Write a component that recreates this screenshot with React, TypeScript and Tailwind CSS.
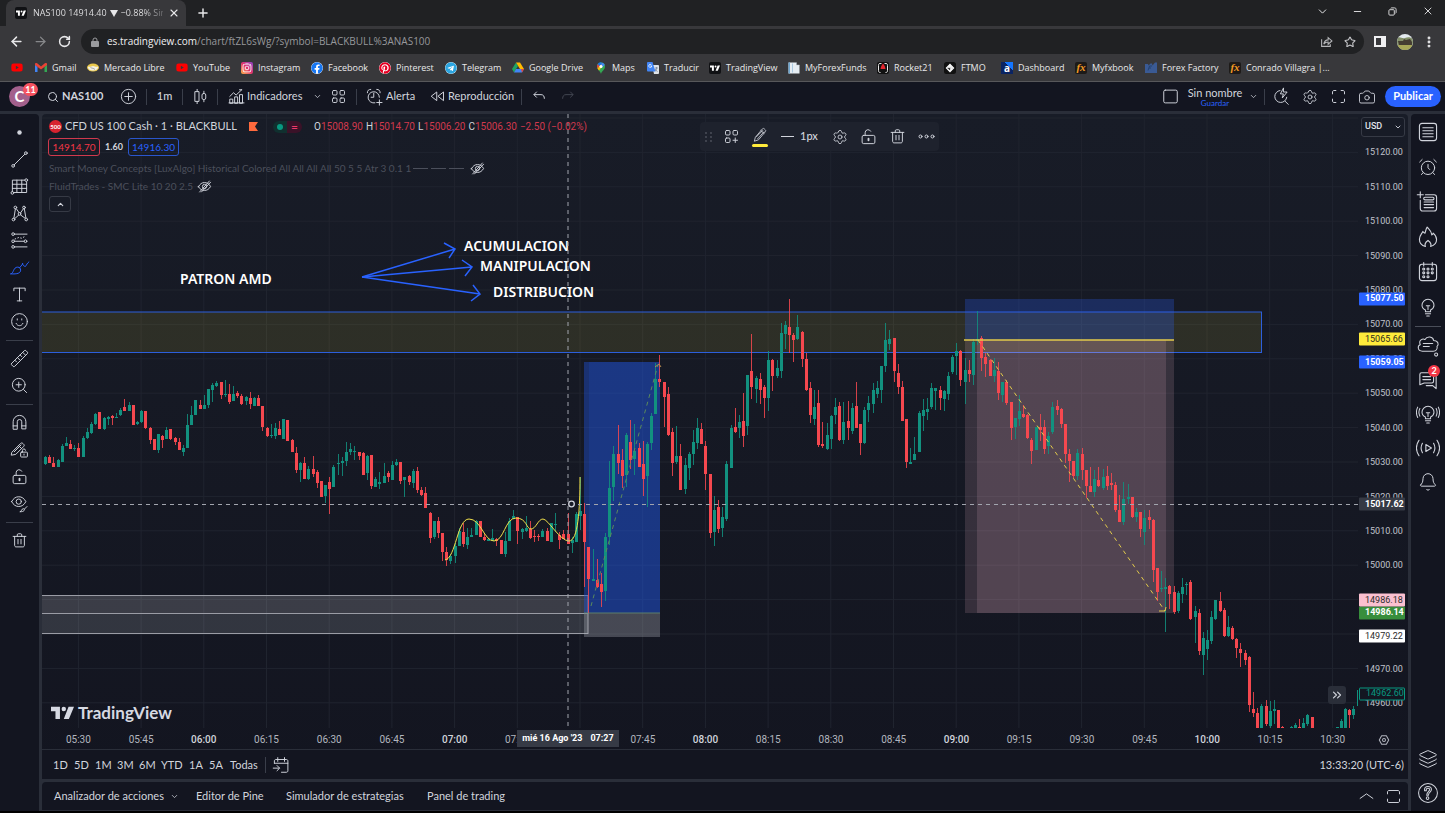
import type { ReactNode } from "react";
import {
  AlarmClock,
  ArrowLeft,
  ArrowRight,
  Bell,
  Camera,
  ChevronDown,
  ChevronUp,
  ChevronsRight,
  Layers,
  Minus,
  MoreVertical,
  Plus,
  RotateCw,
  Search,
  Settings,
  Star,
  X,
} from "lucide-react";
import { FaFacebook, FaInstagram, FaPinterest, FaTelegram, FaYoutube } from "react-icons/fa";

// [high, body top, body bottom, low, up] for each one-minute candle, null where it is out of view
type Candle = [number, number, number, number, number] | null;

const candles: Candle[] = [
  [456, 457, 464, 465, 1], [455, 457, 463, 463, 0], [457, 463, 467, 467, 0], [459, 460, 467, 467, 1], [444, 446, 462, 462, 1],
  [437, 443, 446, 446, 1], [440, 444, 449, 449, 0], [445, 448, 449, 451, 1], [443, 448, 457, 457, 0], [436, 438, 457, 457, 1],
  [428, 432, 438, 439, 1], [422, 424, 433, 434, 1], [413, 414, 424, 425, 1], [412, 412, 429, 429, 0], [417, 418, 429, 430, 1],
  [416, 417, 419, 425, 1], [415, 416, 418, 425, 0], [413, 417, 418, 418, 1], [408, 410, 415, 416, 1], [399, 407, 411, 411, 0],
  [402, 405, 411, 411, 1], [405, 405, 425, 425, 0], [421, 422, 424, 425, 1], [410, 411, 422, 423, 1], [411, 411, 428, 429, 0],
  [427, 428, 440, 444, 0], [439, 439, 450, 450, 0], [434, 434, 450, 453, 1], [435, 436, 440, 448, 0], [427, 430, 439, 439, 1],
  [429, 429, 439, 440, 0], [437, 438, 442, 445, 0], [438, 442, 450, 450, 0], [445, 448, 452, 456, 1], [414, 425, 448, 448, 1],
  [406, 415, 425, 425, 1], [400, 400, 415, 415, 1], [400, 405, 409, 409, 0], [395, 405, 409, 409, 1], [389, 389, 405, 408, 1],
  [383, 385, 390, 402, 1], [381, 383, 386, 387, 1], [382, 382, 395, 399, 0], [380, 394, 395, 397, 1], [384, 394, 402, 404, 0],
  [386, 394, 401, 401, 1], [391, 393, 396, 398, 0], [394, 396, 404, 405, 0], [396, 397, 401, 405, 1], [392, 398, 404, 409, 0],
  [397, 398, 406, 406, 1], [395, 398, 406, 406, 0], [406, 406, 427, 431, 0], [427, 428, 436, 437, 0], [424, 435, 436, 438, 1],
  [423, 428, 436, 439, 1], [421, 429, 435, 435, 0], [419, 419, 439, 439, 1], [420, 420, 441, 441, 0], [439, 440, 452, 452, 0],
  [447, 453, 470, 473, 0], [462, 463, 470, 482, 1], [457, 463, 479, 479, 0], [466, 469, 479, 480, 1], [456, 469, 474, 477, 0],
  [470, 472, 483, 488, 0], [481, 481, 497, 497, 0], [485, 485, 496, 503, 1], [477, 482, 489, 514, 0], [465, 467, 487, 487, 1],
  [454, 463, 464, 475, 1], [457, 461, 463, 476, 1], [442, 452, 461, 466, 1], [443, 449, 452, 455, 1], [446, 451, 452, 460, 1],
  [452, 452, 456, 460, 0], [452, 453, 475, 475, 0], [455, 456, 473, 480, 1], [455, 455, 486, 489, 0], [477, 479, 487, 487, 1],
  [472, 482, 484, 489, 1], [463, 476, 483, 483, 1], [471, 473, 477, 482, 0], [461, 465, 480, 480, 1], [459, 462, 465, 466, 1],
  [462, 462, 481, 484, 0], [477, 477, 480, 497, 1], [475, 476, 482, 485, 0], [469, 471, 483, 488, 1], [467, 471, 490, 493, 0],
  [487, 490, 495, 496, 0], [487, 493, 508, 508, 0], [512, 513, 538, 543, 0], [521, 521, 537, 539, 1], [517, 521, 533, 538, 0],
  [533, 533, 552, 561, 0], [547, 552, 560, 566, 0], [554, 556, 561, 564, 1], [543, 546, 556, 563, 1], [528, 531, 546, 546, 1],
  [523, 532, 544, 547, 0], [528, 537, 545, 549, 1], [528, 535, 537, 537, 1], [520, 521, 535, 535, 1], [521, 521, 537, 537, 0],
  [534, 537, 540, 541, 0], [538, 539, 541, 541, 1], [529, 538, 541, 541, 1], [538, 539, 541, 546, 0], [540, 540, 554, 554, 0],
  [532, 541, 554, 557, 1], [518, 521, 541, 541, 1], [510, 516, 519, 519, 1], [517, 517, 531, 544, 0], [528, 529, 532, 539, 1],
  [516, 528, 531, 532, 1], [521, 529, 538, 539, 0], [530, 536, 537, 542, 0], [534, 536, 537, 541, 0], [529, 531, 537, 537, 1],
  [528, 531, 541, 541, 0], [523, 523, 542, 542, 1], [513, 524, 525, 532, 1], [532, 535, 540, 549, 0], [530, 534, 539, 539, 0],
  [513, 534, 544, 544, 0], [537, 540, 543, 553, 1], [512, 514, 542, 542, 1], [477, 511, 516, 530, 1], [503, 514, 542, 587, 0],
  [547, 547, 579, 613, 0], [549, 579, 581, 581, 1], [559, 580, 587, 588, 0], [573, 584, 592, 607, 0], [533, 537, 591, 601, 1],
  [461, 488, 537, 545, 1], [446, 454, 487, 501, 1], [425, 454, 463, 474, 0], [449, 460, 476, 488, 0], [433, 435, 475, 487, 1],
  [420, 442, 460, 469, 0], [424, 451, 459, 475, 1], [443, 448, 467, 467, 0], [441, 464, 479, 496, 0], [442, 444, 476, 507, 1],
  [413, 416, 443, 450, 1], [363, 379, 414, 414, 1], [355, 379, 382, 387, 0], [382, 382, 397, 427, 0], [387, 394, 435, 436, 0],
  [428, 432, 463, 476, 0], [426, 456, 462, 464, 1], [444, 456, 490, 490, 0], [458, 465, 489, 494, 1], [452, 454, 468, 480, 1],
  [430, 442, 454, 465, 1], [418, 428, 443, 449, 1], [423, 429, 444, 444, 0], [441, 446, 474, 490, 0], [474, 474, 533, 538, 0],
  [496, 510, 532, 546, 1], [500, 507, 529, 533, 0], [507, 517, 528, 537, 1], [461, 464, 519, 521, 1], [425, 428, 468, 468, 1],
  [408, 427, 432, 433, 0], [415, 422, 428, 438, 1], [393, 421, 436, 447, 0], [375, 375, 426, 435, 1], [334, 371, 387, 399, 0],
  [376, 378, 389, 403, 1], [373, 379, 390, 404, 0], [385, 387, 398, 418, 0], [351, 360, 398, 411, 1], [359, 360, 376, 391, 0],
  [360, 368, 376, 378, 1], [323, 333, 371, 378, 1], [321, 325, 334, 349, 1], [299, 327, 335, 353, 0], [333, 335, 340, 362, 0],
  [315, 327, 339, 340, 1], [331, 332, 359, 367, 0], [353, 359, 390, 391, 0], [382, 388, 415, 423, 0], [390, 407, 419, 425, 1],
  [390, 403, 445, 447, 0], [422, 444, 446, 448, 0], [423, 435, 449, 450, 1], [415, 416, 439, 449, 1], [398, 407, 415, 424, 1],
  [402, 406, 440, 441, 0], [402, 422, 440, 444, 1], [401, 421, 428, 440, 0], [403, 408, 431, 434, 1], [382, 406, 428, 428, 0],
  [424, 424, 443, 455, 0], [407, 410, 443, 444, 1], [396, 403, 410, 422, 1], [383, 390, 404, 413, 1], [381, 388, 394, 398, 1],
  [366, 366, 390, 403, 1], [323, 340, 366, 372, 1], [330, 339, 344, 350, 1], [338, 338, 371, 382, 0], [364, 373, 387, 394, 0],
  [381, 387, 421, 421, 0], [419, 419, 462, 468, 0], [448, 462, 464, 464, 1], [437, 454, 460, 460, 1], [411, 413, 452, 452, 1],
  [399, 410, 416, 431, 1], [398, 409, 412, 420, 1], [383, 388, 407, 409, 1], [388, 388, 391, 410, 1], [386, 390, 398, 410, 0],
  [390, 391, 399, 411, 1], [372, 376, 394, 400, 1], [355, 357, 372, 374, 1], [343, 351, 356, 375, 1], [350, 351, 380, 386, 0],
  [358, 370, 382, 404, 1], [360, 370, 374, 382, 0], [339, 342, 375, 385, 1], [311, 339, 341, 345, 1], [336, 338, 358, 371, 0],
  [353, 357, 364, 377, 0], [359, 360, 376, 376, 0], [358, 370, 376, 382, 1], [362, 371, 393, 400, 0], [382, 382, 395, 402, 1],
  [380, 382, 403, 405, 0], [402, 402, 428, 440, 0], [418, 418, 427, 439, 1], [395, 411, 419, 426, 1], [405, 414, 417, 418, 0],
  [414, 415, 438, 439, 0], [438, 440, 451, 464, 0], [427, 427, 450, 450, 1], [414, 427, 430, 441, 0], [420, 427, 449, 454, 0],
  [432, 436, 446, 454, 1], [402, 407, 432, 434, 1], [400, 406, 410, 415, 0], [408, 409, 424, 428, 0], [424, 424, 454, 463, 0],
  [449, 454, 461, 482, 0], [461, 461, 476, 478, 0], [449, 453, 476, 480, 1], [448, 454, 470, 480, 0], [470, 470, 486, 498, 0],
  [467, 486, 492, 492, 0], [470, 479, 492, 497, 1], [467, 480, 486, 487, 0], [469, 477, 488, 490, 1], [466, 476, 486, 490, 0],
  [473, 483, 485, 490, 0], [482, 485, 510, 512, 0], [495, 510, 522, 522, 0], [482, 499, 522, 525, 1], [484, 497, 499, 504, 1],
  [497, 497, 517, 518, 0], [508, 512, 517, 522, 1], [512, 512, 529, 537, 0], [510, 518, 532, 545, 1], [510, 517, 520, 529, 0],
  [519, 520, 570, 582, 0], [568, 568, 592, 601, 0], [571, 588, 589, 592, 1], [578, 587, 589, 632, 1], [585, 586, 594, 609, 0],
  [586, 592, 612, 614, 0], [591, 593, 611, 613, 1], [578, 587, 594, 603, 1], [582, 584, 585, 595, 1], [580, 582, 619, 620, 0],
  [606, 611, 617, 643, 1], [609, 613, 651, 655, 0], [632, 638, 655, 675, 1], [630, 640, 649, 660, 1], [611, 617, 641, 644, 1],
  [600, 600, 619, 620, 1], [592, 601, 611, 612, 0], [608, 610, 636, 637, 0], [616, 627, 636, 637, 1], [626, 628, 639, 640, 0],
  [638, 639, 648, 658, 0], [643, 649, 653, 667, 0], [650, 653, 660, 665, 0], [656, 657, 705, 712, 0], [692, 709, 713, 717, 0],
  [708, 713, 729, 729, 0], [704, 706, 728, 729, 1], [700, 706, 724, 726, 0], [701, 711, 726, 728, 1], [700, 709, 711, 724, 1],
  [710, 710, 729, 729, 0], [726, 727, 729, 729, 0], null, [726, 727, 729, 729, 1], [723, 725, 729, 729, 1],
  [719, 727, 729, 729, 0], [718, 723, 729, 729, 1], [714, 715, 724, 726, 1], [717, 717, 729, 729, 0], null,
  null, null, null, null, [727, 727, 729, 729, 1],
  [719, 721, 729, 729, 1], [708, 709, 728, 728, 1], [709, 710, 715, 728, 0], [706, 709, 715, 719, 1], [690, 690, 706, 715, 1],
];

const firstX = 45;
const stepX = 4.18;

const times = [
  "05:30", "05:45", "06:00", "06:15", "06:30", "06:45", "07:00", "07:15", "07:30", "07:45", "08:00",
  "08:15", "08:30", "08:45", "09:00", "09:15", "09:30", "09:45", "10:00", "10:15", "10:30",
];

const prices = Array.from({ length: 17 }, (_, i) => 15120 - i * 10);

// price at the top edge of the plot and the span that it covers
const topPrice = 15131.2;
const priceSpan = 178.6;

const priceTags = [
  { price: 15077.5, style: "bg-[#2962ff] text-white font-bold" },
  { price: 15065.66, style: "bg-[#ffeb3b] text-[#2b2b20]" },
  { price: 15059.05, style: "bg-[#2962ff] text-white font-bold" },
  { price: 15017.62, style: "bg-[#363a45] text-white font-bold h-4" },
  { price: 14986.14, style: "bg-[#388e3c] text-white font-bold" },
  { price: 14989.8, label: "14986.18", style: "bg-[#fbc0d0] text-[#2b2b2b]" },
  { price: 14979.22, style: "bg-white text-[#2b2b2b]" },
  { price: 14962.6, style: "bg-[#131722] text-[#089981] border border-[#089981]" },
];

function Glyph({ children, className = "size-[21px]", width = 1.3 }: { children: ReactNode; className?: string; width?: number }) {
  return (
    <svg
      viewBox="0 0 28 28"
      className={`shrink-0 ${className}`}
      fill="none"
      stroke="currentColor"
      strokeWidth={width}
      strokeLinecap="round"
      strokeLinejoin="round"
      aria-hidden="true"
    >
      {children}
    </svg>
  );
}

const TrashGlyph = () => (
  <Glyph>
    <path d="M5.5 8.5h17M11 8.5v-2c0-.8.6-1.5 1.5-1.5h3c.9 0 1.5.7 1.5 1.5v2M7.5 8.5v12c0 1.2.8 2 2 2h9c1.2 0 2-.8 2-2v-12M12 12.500v6M16 12.500v6" />
  </Glyph>
);

const LockGlyph = () => (
  <Glyph>
    <rect x="5.500" y="12.500" width="17" height="11" rx="2" />
    <path d="M9.500 12.500V9a4 4 0 0 1 7.500-2" />
    <path d="M14 17v2" strokeWidth="2.500" />
  </Glyph>
);

const GearGlyph = () => <Settings className="size-4" strokeWidth={1.3} />;

const EyeOffGlyph = () => (
  <Glyph className="size-[17px]" width={1.6}>
    <path d="M4 14.500C6.500 9.500 10 7.500 14 7.500s7.500 2 10 6.500c-2.500 4.500-6 6.500-10 6.500s-7.500-2-10-6z" />
    <circle cx="14" cy="14" r="3.500" />
    <path d="M6 23 22 5M9 23 24 7" />
  </Glyph>
);

const BulbGlyph = ({ waves = false }: { waves?: boolean }) => (
  <Glyph className="size-6" width={1.2}>
    <path d="M11 19.500v-2c-2.500-1.200-4-3-4-5.500a7 7 0 0 1 14 0c0 2.500-1.500 4.300-4 5.500v2zM11 22h6M12.500 24.500h3M14 17v-4M12 12.500h4" />
    {waves && <path d="M4.500 7.500c-1.500 3-1.500 6 0 9M2 6c-2 4-2 8 0 12M23.500 7.500c1.500 3 1.500 6 0 9M26 6c2 4 2 8 0 12" />}
  </Glyph>
);

const TvMark = ({ className }: { className: string }) => (
  <svg viewBox="0 0 36 20" className={className} fill="currentColor" aria-hidden="true">
    <path d="M14 20H7V8H0V1h14zM28 20h-8l7.500-19H36z" />
    <circle cx="20" cy="4.500" r="3.500" />
  </svg>
);

const TvBadge = () => (
  <span className="flex size-3 shrink-0 items-center justify-center rounded-xs bg-[#101114] text-white">
    <TvMark className="h-[6px] w-[10px]" />
  </span>
);

const FxBadge = () => (
  <span className="flex size-3 shrink-0 items-center justify-center rounded-xs bg-[#1d1a18] font-['Liberation_Serif',serif] text-[11px] leading-none font-bold text-[#f59b23] italic">
    fx
  </span>
);

const bookmarks: { name: string; width: string; icon: ReactNode }[] = [
  { name: "", width: "w-6", icon: <FaYoutube className="size-[13px] text-[#f00]" /> },
  {
    name: "Gmail",
    width: "w-[52px]",
    icon: (
      <svg viewBox="0 0 24 18" className="h-[9px] w-3">
        <path fill="#4285f4" d="M0 3v15h5V8z" />
        <path fill="#34a853" d="M19 18h5V3l-5 5z" />
        <path fill="#ea4335" d="M0 2c0-2 3-3 5-1l7 6 7-6c2-2 5-1 5 1v2l-12 9L0 4z" />
      </svg>
    ),
  },
  {
    name: "Mercado Libre",
    width: "w-[89px]",
    icon: (
      <svg viewBox="0 0 24 18" className="h-[9px] w-[13px]">
        <ellipse cx="12" cy="9" rx="12" ry="8" fill="#e9c84b" />
        <path d="M2 7c5 2 6-1 10-1s6 3 10 1c1 5-4 8-10 8S1 12 2 7z" fill="#f4f0e2" />
        <path d="M7 9c3 2 6 1 9 4" stroke="#53606f" fill="none" />
      </svg>
    ),
  },
  { name: "YouTube", width: "w-[65px]", icon: <FaYoutube className="size-[13px] text-[#f00]" /> },
  {
    name: "Instagram",
    width: "w-[70px]",
    icon: (
      <span className="flex size-3 items-center justify-center rounded-xs bg-linear-to-tr from-[#fdb13c] via-[#e1306c] to-[#8a3ac8] text-white">
        <FaInstagram className="size-[10px]" />
      </span>
    ),
  },
  { name: "Facebook", width: "w-[68px]", icon: <FaFacebook className="size-3 rounded-full bg-white text-[#1877f2]" /> },
  { name: "Pinterest", width: "w-[66px]", icon: <FaPinterest className="size-3 rounded-full bg-white text-[#e60023]" /> },
  { name: "Telegram", width: "w-[67px]", icon: <FaTelegram className="size-3 rounded-full bg-white text-[#2ca5e0]" /> },
  {
    name: "Google Drive",
    width: "w-[83px]",
    icon: (
      <svg viewBox="0 0 24 22" className="h-[11px] w-3">
        <path fill="#1ea362" d="M8 1 0 14l4 7 8-13z" />
        <path fill="#ffba00" d="M8 1h8l8 13h-8z" />
        <path fill="#4285f4" d="M4 21h16l4-7H8z" />
        <path fill="#ea4335" d="m20 21 4-7h-6z" />
      </svg>
    ),
  },
  {
    name: "Maps",
    width: "w-[52px]",
    icon: (
      <svg viewBox="0 0 20 24" className="h-3 w-[10px]">
        <path fill="#34a853" d="M10 24C9 18 2 16 2 9a8 8 0 0 1 16 0c0 7-7 9-8 15z" />
        <path fill="#1a73e8" d="M3 5a8 8 0 0 1 10-3.500L6 10z" />
        <path fill="#ea4335" d="M3.500 4.500 7 8l-4 5C1.500 10 2 7 3.500 4.500z" />
        <path fill="#fbbc04" d="m3 13 9-10 4 2-10 12z" />
        <path fill="#4285f4" d="M12.500 1.500A8 8 0 0 1 17.500 6L13 10l-3-5z" />
        <circle cx="10" cy="9" r="3" fill="#fff" />
      </svg>
    ),
  },
  {
    name: "Traducir",
    width: "w-[62px]",
    icon: (
      <svg viewBox="0 0 24 24" className="size-3">
        <path fill="#dfe3e8" d="M10 6h12c1 0 2 1 2 2v14c0 1-1 2-2 2h-8z" />
        <path fill="#4285f4" d="M2 0h9l6 19H2c-1 0-2-1-2-2V2c0-1 1-2 2-2z" />
        <path d="M10 8H7M9.500 8a3 3 0 1 1-1-2.500" stroke="#fff" strokeWidth="1.500" fill="none" />
        <path d="M16 12h6M19 10v2c0 3-1 5-3 6m0-4c1 2 3 4 5 5" stroke="#5f6f86" strokeWidth="1.200" fill="none" />
      </svg>
    ),
  },
  { name: "TradingView", width: "w-[79px]", icon: <TvBadge /> },
  {
    name: "MyForexFunds",
    width: "w-[89px]",
    icon: (
      <svg viewBox="0 0 24 24" className="size-3">
        <path fill="#e6edf3" d="M1 1h16v5h6v17H1z" />
        <path fill="#6fa6cf" d="M1 1h3v22H1zM8 3h1v18H8z" />
        <path d="M17 1v5h6" stroke="#b4bfca" fill="none" />
      </svg>
    ),
  },
  {
    name: "Rocket21",
    width: "w-[67px]",
    icon: (
      <svg viewBox="0 0 24 24" className="size-3">
        <rect width="24" height="24" rx="4" fill="#111" />
        <path d="M9 3H6C3 3 3 5 3 7v10c0 3 1 4 4 4M15 3h3c3 0 3 2 3 4v10c0 3-1 4-4 4" stroke="#e8e8e8" strokeWidth="2" fill="none" />
        <path fill="#e3262e" d="M12 3c3 4 4 5 5 11H7C8 8 9 7 12 3z" />
      </svg>
    ),
  },
  {
    name: "FTMO",
    width: "w-[57px]",
    icon: (
      <svg viewBox="0 0 24 24" className="size-3">
        <rect width="24" height="24" rx="5" fill="#111" />
        <path d="m12 5 7 7-7 7-7-7z M9 12l3-3 3 3-3 3" stroke="#fff" strokeWidth="2.500" fill="none" />
      </svg>
    ),
  },
  {
    name: "Dashboard",
    width: "w-[74px]",
    icon: (
      <span className="flex size-3 items-center justify-center bg-linear-to-bl from-[#1476ff] from-35% to-[#0a2463] to-35% text-[10px] leading-none font-bold text-white">
        a
      </span>
    ),
  },
  { name: "Myfxbook", width: "w-[70px]", icon: <FxBadge /> },
  {
    name: "Forex Factory",
    width: "w-[84px]",
    icon: (
      <svg viewBox="0 0 24 22" className="h-[11px] w-3">
        <path fill="#3a5a94" d="M0 4h6l1 3 4-4h3l1 4 5-6h4v21H0z" />
        <path d="M6 17 9 8h5M8 12h4" stroke="#22406f" strokeWidth="2" fill="none" />
      </svg>
    ),
  },
  { name: "Conrado Villagra |...", width: "w-[110px]", icon: <FxBadge /> },
];

function Browser() {
  return (
    <header className="bg-[#38383b] font-['Open_Sans','Noto_Sans',sans-serif] text-[9px] text-[#e8e8ea]">
      <div className="flex h-[26px] items-stretch bg-[#202123]">
        <div className="ml-[6px] flex w-[180px] items-center rounded-t-lg bg-[#38383b] pl-[9px]">
          <TvBadge />
          <span className="ml-[6px] flex w-[130px] items-center overflow-hidden bg-linear-to-r from-[#e8e8ea] from-85% to-[#6a6a6d] bg-clip-text whitespace-nowrap text-transparent">
            NAS100 14914.40
            <svg viewBox="0 0 8 7" className="mx-[3px] h-[7px] w-2 shrink-0" role="img" aria-label="baja">
              <path fill="#e8e8ea" d="M0 0h8L4 7z" />
            </svg>
            −0.88% Sin
          </span>
          <button type="button" aria-label="Cerrar pestaña" className="ml-[5px]">
            <X className="size-3" strokeWidth={2.2} />
          </button>
        </div>
        <button type="button" aria-label="Nueva pestaña" className="ml-[10px]">
          <Plus className="size-[14px]" strokeWidth={2.5} />
        </button>
        <div className="ml-auto flex items-center pb-1">
          <button type="button" aria-label="Buscar pestañas" className="flex w-[35px] justify-center">
            <ChevronDown className="size-[13px]" strokeWidth={1.8} />
          </button>
          <button type="button" aria-label="Minimizar" className="flex w-[35px] justify-center">
            <Minus className="size-[11px]" strokeWidth={2} />
          </button>
          <button type="button" aria-label="Restaurar" className="flex w-[35px] justify-center">
            <svg viewBox="0 0 10 10" className="size-[9px]" fill="none" stroke="currentColor">
              <rect x="1" y="3" width="6" height="6" rx="1" />
              <path d="M3 1.500C3 1 3.500 1 4 1h3c1.500 0 2 .5 2 2v3c0 .5 0 1-.5 1" />
            </svg>
          </button>
          <button type="button" aria-label="Cerrar" className="flex w-[35px] justify-center">
            <X className="size-3" strokeWidth={1.8} />
          </button>
        </div>
      </div>

      <div className="flex h-7 items-center pt-[3px]">
        <button type="button" aria-label="Atrás" className="ml-[9px]">
          <ArrowLeft className="size-[15px]" strokeWidth={2.4} />
        </button>
        <button type="button" aria-label="Adelante" className="ml-[9px] text-[#87888b]">
          <ArrowRight className="size-[15px]" strokeWidth={2} />
        </button>
        <button type="button" aria-label="Recargar" className="ml-[10px]">
          <RotateCw className="size-[13px]" strokeWidth={2.8} />
        </button>
        <div className="ml-[10px] flex h-[25px] flex-1 items-center rounded-full bg-[#202123] pr-[8px] pl-[10px]">
          <svg viewBox="0 0 8 10" className="h-[10px] w-2 text-[#9a9b9e]">
            <rect y="4" width="8" height="6" rx="1" fill="currentColor" />
            <path d="M2 4V3a2 2 0 0 1 4 0v1" stroke="currentColor" fill="none" />
          </svg>
          <div className="ml-2 flex-1 text-[10px] text-[#97989b]">
            <span className="text-[#f0f0f2]">es.tradingview.com</span>/chart/ftZL6sWg/?symbol=BLACKBULL%3ANAS100
          </div>
          <button type="button" aria-label="Compartir" className="text-[#b5b6b9]">
            <svg viewBox="0 0 24 24" className="size-[13px]" fill="none" stroke="currentColor" strokeWidth="2">
              <path d="M3 8v13h16v-4M7 17c1-6 4-8 8-8V5l7 6-7 6v-4c-4 0-6 1-8 4z" />
            </svg>
          </button>
          <button type="button" aria-label="Favorito" className="ml-[11px] text-[#c6c7ca]">
            <Star className="size-3" strokeWidth={2.2} />
          </button>
        </div>
        <button type="button" aria-label="Panel lateral" className="ml-[10px] flex h-[11px] w-[12px] justify-end border-2 border-[#f0f0f2]">
          <span className="h-full w-[3px] bg-[#f0f0f2]" />
        </button>
        <button type="button" aria-label="Perfil" className="ml-[11px]">
          <svg viewBox="0 0 16 16" className="size-4 rounded-full">
            <path fill="#e3e9ee" d="M0 0h16v16H0z" />
            <path fill="#83906a" d="M0 4c3-2 5 1 8 0s5-1 8 1v11H0z" />
            <path fill="#453e32" d="M1 7h5l1-2 2 1 4-1 2 3v3H2z" />
            <path fill="#a8a858" d="M0 11h16v5H0z" />
          </svg>
        </button>
        <button type="button" aria-label="Menú" className="mr-[9px] ml-[9px]">
          <MoreVertical className="size-[14px]" strokeWidth={3} />
        </button>
      </div>

      <nav className="flex h-7 items-center overflow-hidden border-b border-[#57575a] pl-[11px]">
        {bookmarks.map((b, i) => (
          <a key={i} href="#" aria-label={b.name || "YouTube"} className={`flex shrink-0 items-center gap-[5px] whitespace-nowrap ${b.width}`}>
            <span className="flex w-3 shrink-0 justify-center">{b.icon}</span>
            {b.name}
          </a>
        ))}
      </nav>
    </header>
  );
}

const Divider = () => <span className="h-4 w-px shrink-0 bg-[#3a3e4a]" />;

function TopBar() {
  return (
    <div className="flex h-[29px] items-center bg-[#131520] text-[11px] text-[#d1d4dc]">
      <button type="button" aria-label="Menú de usuario" className="relative ml-[9px] flex size-[21px] items-center justify-center rounded-full bg-[#a3608c] text-[15px] font-bold text-white">
        C
        <span className="absolute -top-[3px] left-[14px] flex h-[13px] w-[15px] items-center justify-center rounded-full bg-[#f7525f] text-[9px] font-bold">
          11
        </span>
      </button>
      <button type="button" className="ml-[17px] flex w-[69px] items-center gap-[3px] font-bold">
        <Search className="size-3" strokeWidth={2} />
        NAS100
      </button>
      <button type="button" aria-label="Comparar" className="flex w-[25px] justify-center">
        <Glyph>
          <circle cx="14" cy="14" r="9.500" />
          <path d="M14 9v10M9 14h10" />
        </Glyph>
      </button>
      <span className="w-[5px]" />
      <Divider />
      <button type="button" className="w-[35px] font-medium">
        1m
      </button>
      <Divider />
      <button type="button" aria-label="Velas" className="flex w-[34px] justify-center">
        <Glyph>
          <path d="M9.500 4.500v3M9.500 20.500v3M18.500 7v3M18.500 18v3" />
          <rect x="7" y="7.500" width="5" height="13" />
          <rect x="16" y="10" width="5" height="8" rx="2" />
        </Glyph>
      </button>
      <Divider />
      <button type="button" className="ml-[8px] flex w-[80px] items-center">
        <Glyph>
          <path d="M5 22.500v-5h4v5zM11.500 22.500v-8h4v8zM18 22.500v-11h4v11zM5 14l5-5 3.500 3L21 5M21 5h-3M4 22.500h20" />
        </Glyph>
        Indicadores
      </button>
      <button type="button" aria-label="Favoritos" className="ml-[7px]">
        <ChevronDown className="size-[9px]" strokeWidth={2} />
      </button>
      <button type="button" aria-label="Plantillas" className="ml-[6px]">
        <Glyph>
          <rect x="6" y="6" width="6" height="6" rx="1.500" />
          <rect x="16" y="6" width="6" height="6" rx="1.500" />
          <rect x="6" y="16" width="6" height="6" rx="1.500" />
          <rect x="16" y="16" width="6" height="6" rx="1.500" />
        </Glyph>
      </button>
      <span className="w-[7px]" />
      <Divider />
      <button type="button" className="ml-[7px] flex w-[59px] items-center gap-px">
        <Glyph>
          <path d="M20.500 15a7.500 7.500 0 1 0-6 7.500M13 9.500V15H9.500M4.500 9C4.500 6 6 4.500 9 4.500M21.500 9c0-3-1.500-4.500-4.500-4.500M20.500 18.500v7M17 22h7" />
        </Glyph>
        Alerta
      </button>
      <button type="button" className="ml-[4px] flex w-[94px] items-center">
        <Glyph>
          <path d="M13 8.500v11L6 14zM22 8.500v11L15 14z" />
        </Glyph>
        Reproducción
      </button>
      <Divider />
      <button type="button" aria-label="Deshacer" className="ml-[7px]">
        <Glyph>
          <path d="m10 8-3.500 3.500L10 15M7 11.500h9c3 0 4.500 2 4.500 5" />
        </Glyph>
      </button>
      <button type="button" aria-label="Rehacer" className="ml-[7px] text-[#434651]">
        <Glyph>
          <path d="m18 8 3.500 3.500L18 15M21 11.500h-9c-3 0-4.500 2-4.500 5" />
        </Glyph>
      </button>

      <button type="button" aria-label="Diseño" className="ml-auto">
        <Glyph>
          <rect x="5" y="5.500" width="18" height="17" rx="2" />
        </Glyph>
      </button>
      <button type="button" className="ml-[5px] flex w-[58px] flex-col items-center">
        <span className="h-3 leading-3">Sin nombre</span>
        <span className="h-2 text-[8px] leading-2 text-[#2962ff]">Guardar</span>
      </button>
      <button type="button" aria-label="Diseños guardados" className="ml-[5px]">
        <ChevronDown className="size-[9px]" strokeWidth={2} />
      </button>
      <span className="w-[6px]" />
      <Divider />
      <button type="button" aria-label="Búsqueda rápida" className="ml-[6px]">
        <Glyph>
          <path d="M12 6a8 8 0 1 0 9 9M19 20.500l4 4M16.500 3l-4 7.500h4L15 16l6.500-8H17z" />
        </Glyph>
      </button>
      <button type="button" aria-label="Ajustes" className="ml-[10px]">
        <GearGlyph />
      </button>
      <button type="button" aria-label="Pantalla completa" className="ml-[10px]">
        <Glyph>
          <path d="M6 10.500V8c0-1 .8-2 2-2h2.500M17.500 6H20c1.200 0 2 1 2 2v2.500M22 17.500V20c0 1.200-.8 2-2 2h-2.500M10.500 22H8c-1.200 0-2-.8-2-2v-2.500" />
        </Glyph>
      </button>
      <button type="button" aria-label="Instantánea" className="ml-[9px]">
        <Camera className="size-[18px]" strokeWidth={1.2} />
      </button>
      <button type="button" className="mr-[4px] ml-[9px] h-[21px] w-14 rounded-full bg-[#2962ff] text-[11px] font-bold text-white">
        Publicar
      </button>
    </div>
  );
}

const drawTools: { name: string; art: ReactNode }[] = [
  { name: "Cursor", art: <circle cx="14" cy="14" r="3" fill="currentColor" stroke="none" /> },
  {
    name: "Línea de tendencia",
    art: (
      <>
        <circle cx="5.500" cy="22.500" r="1.800" />
        <circle cx="22.500" cy="5.500" r="1.800" />
        <path d="M7 21 21 7" />
      </>
    ),
  },
  {
    name: "Fibonacci",
    art: (
      <>
        <path d="M4.500 21V5.500H21M23.500 8v14H7M4.500 11h19M4.500 16.500h19M10.500 5.500V22M17 5.500V22" />
        <circle cx="23" cy="5.500" r="1.800" />
        <circle cx="4.500" cy="22.500" r="1.800" />
      </>
    ),
  },
  {
    name: "Patrones",
    art: (
      <>
        <path d="M6.500 20.500 8.500 8M10 8l3.500 5M7.500 21l5.500-5M15.500 13 19 8M15.500 16l5.500 4M20.500 8l2 12" />
        <circle cx="6" cy="22" r="1.800" />
        <circle cx="8.500" cy="6" r="1.800" />
        <circle cx="14" cy="14.500" r="1.800" />
        <circle cx="20" cy="6" r="1.800" />
        <circle cx="23" cy="22" r="1.800" />
      </>
    ),
  },
  {
    name: "Pronóstico",
    art: (
      <>
        <circle cx="5.500" cy="5.500" r="1.800" />
        <circle cx="5.500" cy="15" r="1.800" />
        <circle cx="5.500" cy="22.500" r="1.800" />
        <circle cx="22" cy="15" r="1.800" />
        <path d="M7.500 5.500H24M7.500 15h12.500M7.500 22.500H24" />
        <path d="m8 12 5-2 4 1 5-3" strokeDasharray="1 3" />
      </>
    ),
  },
  {
    name: "Pincel",
    art: <path d="M2.500 22.500c4-.5 3-9 9-9 3 0 4 2 4 4 0 4-4 5.500-13 5zM14.500 14 18 9.500M18 8.500c.5 2.500 1.500 4 4 4 1.500-2 2-4 4.500-6" />,
  },
  { name: "Texto", art: <path d="M6.500 9V5.500h15V9M14 5.500v17M11 22.500h6" /> },
  {
    name: "Iconos",
    art: (
      <>
        <circle cx="14" cy="14" r="10.500" />
        <path d="M9.500 16.500c1 2 2.500 3 4.500 3s3.500-1 4.500-3M11 10.500v1.500M17 10.500v1.500" />
      </>
    ),
  },
];

const viewTools: { name: string; art: ReactNode }[] = [
  { name: "Medir", art: <path d="m3.500 20.500 17-17c.5-.5 1.500-.5 2 0l2 2c.5.5.5 1.500 0 2l-17 17c-.5.500-1.500.500-2 0l-2-2c-.5-.5-.5-1.500 0-2zM8 16.500l2 2M11.500 13l3 3M15 9.500l2 2M18.500 6l3 3" /> },
  {
    name: "Zoom",
    art: (
      <>
        <circle cx="13" cy="13" r="8.500" />
        <path d="M13 9.500v7M9.500 13h7M19.500 19.500l4 4" />
      </>
    ),
  },
];

const modeTools: { name: string; art: ReactNode }[] = [
  { name: "Imán", art: <path d="M5.500 22.500V13a8.500 8.500 0 0 1 17 0v9.500h-5.500V13a3 3 0 0 0-6 0v9.500zM5.500 18.500H11M17 18.500h5.500" /> },
  {
    name: "Modo dibujo",
    art: (
      <>
        <path d="M4 17.500 15.500 6c1-1 2-1 3 0l1 1c1 1 1 2 0 3L9 20.500l-5.500 1zM13 9l4 4M7 17l9-9" />
        <rect x="15.500" y="17.500" width="9" height="6.500" rx="1" />
        <path d="M18 17.500v-2a2 2 0 0 1 4-.5M20 20v1.500" />
      </>
    ),
  },
  {
    name: "Bloquear",
    art: (
      <>
        <rect x="5.500" y="12.500" width="17" height="11" rx="2" />
        <path d="M9.500 12.500V9a4 4 0 0 1 7.500-2" />
        <path d="M14 17v2" strokeWidth="2.500" />
      </>
    ),
  },
  {
    name: "Ocultar",
    art: (
      <>
        <path d="M3.500 11.500C6 7 9 5 13 5s7 2 9.500 6.500C20 16 17 18 13 18s-7-2-9.500-6.500z" />
        <circle cx="13" cy="11.500" r="3.500" />
        <path d="M15 25c2 0 1.500-4 4-4 2 0 2 1.500 1 2.500s-2.500 1.500-5 1.500zM21 21l3-3" />
      </>
    ),
  },
];

function ToolGroup({ tools, active }: { tools: { name: string; art: ReactNode }[]; active?: string }) {
  return (
    <>
      {tools.map((tool) => (
        <button
          key={tool.name}
          type="button"
          aria-label={tool.name}
          className={`flex h-[27px] w-full items-center justify-center ${tool.name === active ? "text-[#2962ff]" : "text-[#d1d4dc]"}`}
        >
          <Glyph>{tool.art}</Glyph>
        </button>
      ))}
    </>
  );
}

const ToolRule = () => (
  <div className="flex h-[10px] w-full items-center justify-center">
    <span className="h-px w-[27px] bg-[#3a3e4a]" />
  </div>
);

function DrawBar() {
  return (
    <aside className="flex w-[39px] shrink-0 flex-col items-center rounded-tr-sm bg-[#131520] pt-[5px]">
      <ToolGroup tools={drawTools} active="Pincel" />
      <ToolRule />
      <ToolGroup tools={viewTools} />
      <ToolRule />
      <ToolGroup tools={modeTools} />
      <ToolRule />
      <button type="button" aria-label="Eliminar" className="flex h-[27px] w-full items-center justify-center text-[#d1d4dc]">
        <TrashGlyph />
      </button>
    </aside>
  );
}

const sideTop: { name: string; icon: ReactNode }[] = [
  {
    name: "Lista de seguimiento",
    icon: (
      <Glyph className="size-6" width={1.3}>
        <rect x="4" y="4" width="20" height="20" rx="3" />
        <path d="M8 9h12M8 12.500h12M8 16h12M8 19.500h12" />
      </Glyph>
    ),
  },
  { name: "Alertas", icon: <AlarmClock className="size-5" strokeWidth={1.2} /> },
  {
    name: "Ventana de datos",
    icon: (
      <Glyph className="size-6" width={1.3}>
        <path d="M11 5.500h10c1.800 0 3 1.200 3 3v13c0 1.800-1.200 3-3 3H8c-1.800 0-3-1.200-3-3V12M5 2v7M1.500 5.500h7M9.500 17h11M9.500 20.500h11M9.500 14h11" />
        <rect x="9" y="8.500" width="12" height="3" rx="1.500" />
      </Glyph>
    ),
  },
  {
    name: "Tendencias",
    icon: (
      <Glyph className="size-6" width={1.3}>
        <path d="M11 25c-4-1-7-4-7-8.500 0-4 2.500-6 4-9 .5 1 1.500 1.500 2.500 2 1-2.500 1-5 2.500-7 2 2.500 5 4 5.500 9 .8-.5 1.300-1 1.500-2 2.500 2 4 4.500 4 7.500 0 4-3 7-7 8 1-2 .5-4.500-3-7-3.500 2.500-4 5-3 7z" />
      </Glyph>
    ),
  },
  {
    name: "Calendario",
    icon: (
      <Glyph className="size-6" width={1.3}>
        <rect x="4" y="5" width="20" height="19" rx="3" />
        <path d="M9 3v4M19 3v4" />
        {[10.5, 15, 19.5].map((y) =>
          [9, 14, 19].map((x) => (x === 19 && y === 19.5 ? null : <circle key={`${x}-${y}`} cx={x} cy={y} r="1.200" />))
        )}
      </Glyph>
    ),
  },
  { name: "Mis ideas", icon: <BulbGlyph /> },
];

const sideMiddle: { name: string; icon: ReactNode }[] = [
  {
    name: "Chats públicos",
    icon: (
      <Glyph className="size-6" width={1.2}>
        <path d="M20 20H7.500c-6 0-6-6.500-2.500-7.500C2.500 7 8 5 10.500 6.500 13 2 20 3 20.500 7.500c5.500 0 6.500 5 4 7 1 3-1 5.500-4.500 5.500M8.500 11h11M8.500 14.500h7" />
        <circle cx="23.500" cy="24" r="1.800" />
      </Glyph>
    ),
  },
  {
    name: "Chats privados",
    icon: (
      <Glyph className="size-6" width={1.3}>
        <path d="M4.500 19.500v-12c0-1.200.8-2 2-2h12c1.200 0 2 .8 2 2v8c0 1.200-.8 2-2 2h-9zM8 10h9M8 13.500h9M23.500 10v14l-4-3.500H12" />
      </Glyph>
    ),
  },
  { name: "Flujo de ideas", icon: <BulbGlyph waves /> },
  {
    name: "Emisiones",
    icon: (
      <Glyph className="size-6" width={1.3}>
        <path d="m11.500 10 6.500 4-6.500 4zM7.500 8.500c-2 3.500-2 7.500 0 11M3.500 5c-4 6-4 12 0 18M20.500 8.500c2 3.500 2 7.500 0 11M24.500 5c4 6 4 12 0 18" />
      </Glyph>
    ),
  },
  { name: "Notificaciones", icon: <Bell className="size-5" strokeWidth={1.2} /> },
];

function SideBar() {
  return (
    <aside className="flex w-[34px] shrink-0 flex-col items-center rounded-tl-sm bg-[#131520] pb-px text-[#d1d4dc]">
      {sideTop.map((item) => (
        <button key={item.name} type="button" aria-label={item.name} className="flex h-[35px] w-full items-center justify-center">
          {item.icon}
        </button>
      ))}
      <span className="my-[2px] h-px w-[26px] bg-[#4a4e59]" />
      {sideMiddle.map((item) => (
        <button key={item.name} type="button" aria-label={item.name} className="relative flex h-[34px] w-full items-center justify-center">
          {item.icon}
          {item.name === "Chats privados" && (
            <span className="absolute top-[2px] right-[5px] flex size-3 items-center justify-center rounded-full bg-[#f23645] text-[9px] font-bold text-white">
              2
            </span>
          )}
        </button>
      ))}
      <button type="button" aria-label="Árbol de objetos" className="mt-auto flex h-[34px] w-full items-center justify-center">
        <Layers className="size-5" strokeWidth={1.2} />
      </button>
      <button type="button" aria-label="Ayuda" className="flex h-[34px] w-full items-center justify-center">
        <Glyph className="size-6" width={1.2}>
          <circle cx="14" cy="14" r="11" />
          <path d="M10 11.500V10c0-2 1.500-3.500 4-3.500s4 1.500 4 3.500c0 3-3.500 3-3.500 6.500h-2c0-4 3.500-4.500 3.500-6.500 0-1-.8-1.500-2-1.500s-2 .5-2 1.500v1.500z" />
          <circle cx="13.500" cy="20" r="1.500" />
        </Glyph>
      </button>
    </aside>
  );
}

function Plot() {
  return (
    <svg
      viewBox="42 114 1316 614"
      preserveAspectRatio="xMinYMin slice"
      className="absolute inset-0 size-full font-['Noto_Sans','Open_Sans',sans-serif]"
      role="img"
      aria-label="Gráfico NAS100"
    >
      <g stroke="#20242f">
        {Array.from({ length: 18 }, (_, i) => (
          <line key={i} x1="42" x2="1358" y1={118 + i * 34.4} y2={118 + i * 34.4} />
        ))}
        {times.map((t, i) => (
          <line key={t} x1={78.4 + i * 62.7} x2={78.4 + i * 62.7} y1="114" y2="728" />
        ))}
      </g>

      {/* supply and demand zones */}
      <rect x="30" y="312" width="1231.500" height="40.500" fill="#ffeb3b" fillOpacity="0.1" stroke="#2c5fdc" />
      <rect x="30" y="595.500" width="558" height="18" fill="#d5d7de" fillOpacity="0.2" stroke="#9a9ca5" />
      <rect x="30" y="613.500" width="558" height="20" fill="#d5d7de" fillOpacity="0.16" stroke="#9a9ca5" />

      {/* long position */}
      <rect x="584" y="362" width="76" height="251" fill="#2050d0" fillOpacity="0.45" />
      <rect x="589" y="362" width="71" height="251" fill="#2962ff" fillOpacity="0.13" />
      <rect x="584" y="613" width="76" height="24" fill="#b2b5be" fillOpacity="0.32" />
      <path d="M584 613h76" stroke="#5c7f6c" />

      {/* short position */}
      <rect x="965" y="299" width="209" height="41" fill="#2962ff" fillOpacity="0.26" />
      <rect x="965" y="340" width="209" height="273" fill="#f7bed0" fillOpacity="0.15" />
      <rect x="977" y="340" width="189" height="273" fill="#f7bed0" fillOpacity="0.15" />

      {candles.map((c, i) => {
        if (!c) return null;
        const [high, top, bottom, low, up] = c;
        const x = Math.round(firstX + i * stepX);
        return (
          <g key={i} fill={up ? "#12917f" : "#f5484f"}>
            <rect x={x} y={high} width="1" height={low - high} fillOpacity="0.85" />
            <rect x={x - 1} y={top} width="3" height={Math.max(bottom - top, 1)} />
          </g>
        );
      })}

      <path d="M964 340h210" stroke="#e3cb4b" strokeWidth="1.500" />
      <path d="m978 340 187 271" stroke="#e3cb4b" strokeDasharray="4 4" />
      <path d="M1159 611h6l1-4" stroke="#e3cb4b" fill="none" />
      <path d="m591 606 67-241" stroke="#5a8a5c" strokeDasharray="4 4" />
      <path d="m655 367 4-3 2 3" stroke="#b98c4e" fill="none" />

      <path
        d="M445 560C456 558 457 519 469 519S484 541 494 541S505 518 516 518S526 529 531 529S538 519 543 519S560 541 569 541S580 510 580 477"
        stroke="#f0e04a"
        fill="none"
      />

      <g stroke="#2962ff" strokeWidth="1.500" fill="none">
        <path d="m362 277 93-28M444 243l11 6-6 9" />
        <path d="m362 277 110-10M462 260l10 7-7 9" />
        <path d="m362 277 118 17M473 285l7 9-9 7" />
      </g>
      <g fill="#ffffff" className="text-[14px] font-semibold">
        <text x="180" y="284">PATRON AMD</text>
        <text x="464" y="251">ACUMULACION</text>
        <text x="480" y="271">MANIPULACION</text>
        <text x="493" y="297">DISTRIBUCION</text>
      </g>

      <g stroke="#a2a5ae" strokeDasharray="4 4">
        <path d="M42 504.500h1316" />
        <path d="M568 114v614" />
      </g>
      <circle cx="571.500" cy="504" r="2.800" fill="#171b26" stroke="#d1d4dc" strokeWidth="1.300" />
    </svg>
  );
}

const ohlc = [
  ["O", "15008.90"],
  ["H", "15014.70"],
  ["L", "15006.20"],
  ["C", "15006.30"],
];

function Legend() {
  return (
    <div className="absolute top-[4px] left-[7px] text-[#d1d4dc]">
      <div className="flex h-[17px] items-center whitespace-nowrap">
        <span className="flex size-[13px] items-center justify-center rounded-full bg-[#d8232f] text-[6px] font-bold text-white">500</span>
        <span className="ml-[3px] w-[184px] text-[11px]">CFD US 100 Cash · 1 · BLACKBULL</span>
        <svg viewBox="0 0 9 9" className="size-[9px]">
          <path fill="#ff6a3d" d="M0 0h9L6 4.500 9 9H0z" />
        </svg>
        <span className="ml-[15px] flex h-3 w-[14px] items-center justify-center rounded-l-full bg-[#10302f]">
          <span className="size-[6px] rounded-full bg-[#089981]" />
        </span>
        <span className="flex h-3 w-[15px] items-center justify-center rounded-r-full bg-[#3a1228] text-[12px] leading-none text-[#f0386b]">=</span>
        <span className="ml-[12px] flex gap-[3px] font-[Roboto,sans-serif] text-[10px]">
          {ohlc.map(([key, value]) => (
            <span key={key} className="flex">
              {key}
              <span className="text-[#d0394d]">{value}</span>
            </span>
          ))}
          <span className="text-[#d0394d]">−2.50 (−0.02%)</span>
        </span>
      </div>
      <div className="mt-[3px] flex h-[18px] items-center text-[10px]">
        <button type="button" className="-ml-px h-[18px] w-[52px] rounded-[3px] border border-[#d0394d] text-[#f23645]">
          14914.70
        </button>
        <span className="w-[28px] text-center text-[9px] font-bold">1.60</span>
        <button type="button" className="h-[18px] w-[51px] rounded-[3px] border border-[#2a56cc] text-[#2962ff]">
          14916.30
        </button>
      </div>
      <div className="mt-[3px] flex h-[18px] items-center text-[10px] whitespace-nowrap text-[#4b4f5b]">
        Smart Money Concepts [LuxAlgo] Historical Colored All All All All 50 5 5 Atr 3 0.1 1
        <span className="ml-[2px] flex gap-[3px]">
          <span className="h-px w-[15px] bg-[#4b4f5b]" />
          <span className="h-px w-[15px] bg-[#4b4f5b]" />
          <span className="h-px w-[15px] bg-[#4b4f5b]" />
        </span>
        <button type="button" aria-label="Mostrar Smart Money Concepts" className="ml-[5px] text-[#d1d4dc]">
          <EyeOffGlyph />
        </button>
      </div>
      <div className="flex h-[18px] items-center text-[10px] text-[#4b4f5b]">
        FluidTrades - SMC Lite 10 20 2.5
        <button type="button" aria-label="Mostrar FluidTrades" className="ml-[3px] text-[#d1d4dc]">
          <EyeOffGlyph />
        </button>
      </div>
      <button type="button" aria-label="Contraer leyenda" className="mt-px flex h-4 w-[22px] items-center justify-center rounded-[3px] border border-[#363a45]">
        <ChevronUp className="size-[9px]" strokeWidth={3} />
      </button>
    </div>
  );
}

function FloatingBar() {
  return (
    <div className="absolute top-[8px] left-1/2 flex h-[29px] w-[239px] items-center rounded-sm bg-[#1e222d] text-[11px] text-[#d1d4dc]">
      <svg viewBox="0 0 7 10" className="ml-[5px] h-[10px] w-[7px]" fill="#50535e">
        {[1, 5, 9].map((y) => [1, 6].map((x) => <circle key={`${x}-${y}`} cx={x} cy={y} r="0.900" />))}
      </svg>
      <button type="button" aria-label="Plantillas de dibujo" className="ml-[9px]">
        <Glyph>
          <rect x="6" y="6" width="6" height="6" rx="1.500" />
          <rect x="16" y="6" width="6" height="6" rx="1.500" />
          <rect x="6" y="16" width="6" height="6" rx="1.500" />
          <path d="M19 16v6M16 19h6" />
        </Glyph>
      </button>
      <button type="button" aria-label="Color" className="ml-[7px] flex flex-col items-center">
        <Glyph className="h-[18px] w-[21px]">
          <path d="M8 17 18.500 4.500c.8-1 2-1 3 0l1.500 1.500c1 1 1 2 0 3L12.500 21.500l-6 2zM16 7l5 4.500M9 17l10-10M11 20 21 9" />
        </Glyph>
        <span className="h-[3px] w-4 rounded-full bg-[#ffeb3b]" />
      </button>
      <button type="button" className="ml-[11px] flex w-[37px] items-center gap-[6px] font-medium">
        <span className="h-px w-[13px] bg-current" />
        1px
      </button>
      <button type="button" aria-label="Ajustes" className="ml-[14px]">
        <GearGlyph />
      </button>
      <button type="button" aria-label="Bloquear dibujo" className="ml-[10px]">
        <LockGlyph />
      </button>
      <button type="button" aria-label="Eliminar dibujo" className="ml-[8px]">
        <TrashGlyph />
      </button>
      <button type="button" aria-label="Más" className="ml-[8px]">
        <Glyph>
          <circle cx="6" cy="14" r="2" />
          <circle cx="14" cy="14" r="2" />
          <circle cx="22" cy="14" r="2" />
        </Glyph>
      </button>
    </div>
  );
}

function PriceAxis() {
  return (
    <div className="relative w-[50px] shrink-0 overflow-hidden font-[Roboto,sans-serif] text-[9px] text-[#c0c3cc]">
      <div className="flex h-full flex-col pt-[22px] pb-[7px]">
        {prices.map((p) => (
          <span key={p} className="flex flex-1 items-center pl-[7px]">
            {p.toFixed(2)}
          </span>
        ))}
      </div>
      <label htmlFor="currency" className="sr-only">
        Moneda
      </label>
      <div className="absolute top-[3px] left-[3px] h-5 w-11">
        <select id="currency" className="size-full appearance-none rounded-[3px] border border-[#363a45] bg-[#171b26] pl-[3px] text-[9px] font-medium text-[#e0e3eb]">
          <option>USD</option>
        </select>
        <ChevronDown className="pointer-events-none absolute top-[6px] right-[3px] size-2" strokeWidth={3} />
      </div>
      {priceTags.map((tag) => (
        <span
          key={tag.price}
          className={`absolute left-px flex h-[13px] w-[46px] -translate-y-1/2 items-center rounded-[1px] pl-[6px] ${tag.style}`}
          style={{ top: `${((topPrice - tag.price) / priceSpan) * 100}%` }}
        >
          {tag.label ?? tag.price.toFixed(2)}
        </span>
      ))}
    </div>
  );
}

const ranges = [
  ["1D", "w-[21px]"],
  ["5D", "w-[21px]"],
  ["1M", "w-[22px]"],
  ["3M", "w-[22px]"],
  ["6M", "w-[22px]"],
  ["YTD", "w-[28px]"],
  ["1A", "w-[20px]"],
  ["5A", "w-[21px]"],
  ["Todas", "w-[35px]"],
];

function ChartPane() {
  return (
    <section className="flex min-h-0 flex-1 flex-col overflow-hidden rounded-t-sm bg-linear-to-b from-[#181c27] to-[#131520]">
      <div className="flex min-h-0 flex-1">
        <div className="relative flex-1 overflow-hidden">
          <Plot />
          <Legend />
          <FloatingBar />
          <div className="absolute bottom-[7px] left-[9px] flex items-center gap-[4px] text-[#d6d9e2]">
            <TvMark className="h-[13px] w-[23px]" />
            <span className="text-[17px] leading-[17px] font-bold">TradingView</span>
          </div>
          <button type="button" aria-label="Ir a la última barra" className="absolute right-[12px] bottom-[24px] flex size-[18px] items-center justify-center rounded-[3px] bg-[#2a2e39] text-[#d1d4dc]">
            <ChevronsRight className="size-[14px]" strokeWidth={2} />
          </button>
        </div>
        <PriceAxis />
      </div>
      <div className="relative flex h-[22px] shrink-0 items-center border-b border-[#2a2e39] pt-px pr-[44px] pl-[5px] font-[Roboto,sans-serif] text-[10px] text-[#b2b5be]">
        {times.map((t) => (
          <span key={t} className={`flex-1 text-center ${t.endsWith("00") ? "font-medium text-[#d1d4dc]" : ""}`}>
            {t}
          </span>
        ))}
        <span className="absolute top-[2px] left-[475px] flex h-[17px] w-[102px] items-center justify-center gap-[8px] bg-[#363a45] text-[9px] font-bold whitespace-nowrap text-white">
          <span>mié 16 Ago &apos;23</span>
          <span>07:27</span>
        </span>
        <button type="button" aria-label="Ajustes de escala" className="absolute top-[6px] right-[18px] text-[#b2b5be]">
          <Glyph className="size-3" width={2.4}>
            <path d="M8.500 4h11L25 14l-5.500 10h-11L3 14z" />
            <circle cx="14" cy="14" r="3.500" />
          </Glyph>
        </button>
      </div>
      <div className="flex h-[29px] shrink-0 items-center bg-[#131520] pt-px pl-[11px] text-[11px] text-[#d1d4dc]">
        {ranges.map(([label, width]) => (
          <button key={label} type="button" className={`text-left ${width}`}>
            {label}
          </button>
        ))}
        <Divider />
        <button type="button" aria-label="Ir a la fecha" className="ml-[5px]">
          <Glyph>
            <path d="M4.500 11V8c0-1.200.8-2 2-2h14c1.200 0 2 .8 2 2v13c0 1.200-.8 2-2 2H14M9 3.500v5M18 3.500v5M4.500 11h18M3 17.500h8M8 14l3.500 3.500L8 21" />
          </Glyph>
        </button>
        <span className="mr-[4px] ml-auto">13:33:20 (UTC-6)</span>
      </div>
    </section>
  );
}

function Footer() {
  return (
    <footer className="mt-[3px] mb-px flex h-7 shrink-0 items-center rounded-t-sm bg-[#131520] pt-px pl-3 text-[11px] whitespace-nowrap text-[#d1d4dc]">
      <button type="button" className="w-[116px] text-left">
        Analizador de acciones
      </button>
      <ChevronDown className="size-[9px]" strokeWidth={2} />
      <button type="button" className="ml-[17px] w-[90px] text-left">
        Editor de Pine
      </button>
      <button type="button" className="w-[141px] text-left">
        Simulador de estrategias
      </button>
      <button type="button">Panel de trading</button>
      <button type="button" aria-label="Abrir panel" className="ml-auto">
        <Glyph>
          <path d="m5.500 16.500 8.500-6 8.500 6" />
        </Glyph>
      </button>
      <button type="button" aria-label="Maximizar panel" className="mr-[4px] ml-[6px]">
        <Glyph>
          <path d="M6 10.500V8c0-1 .8-2 2-2h12c1.200 0 2 1 2 2v2.500M22 17.500V20c0 1.200-.8 2-2 2H8c-1.200 0-2-.8-2-2v-2.500" />
        </Glyph>
      </button>
    </footer>
  );
}

export default function App() {
  return (
    <div className="flex h-screen flex-col overflow-hidden border-b-2 border-black bg-[#2a2e39] font-[Lato,'Noto_Sans',sans-serif]">
      <Browser />
      <TopBar />
      <div className="mt-[3px] flex min-h-0 flex-1 gap-[3px]">
        <DrawBar />
        <main className="flex min-w-0 flex-1 flex-col">
          <ChartPane />
          <Footer />
        </main>
        <SideBar />
      </div>
    </div>
  );
}
